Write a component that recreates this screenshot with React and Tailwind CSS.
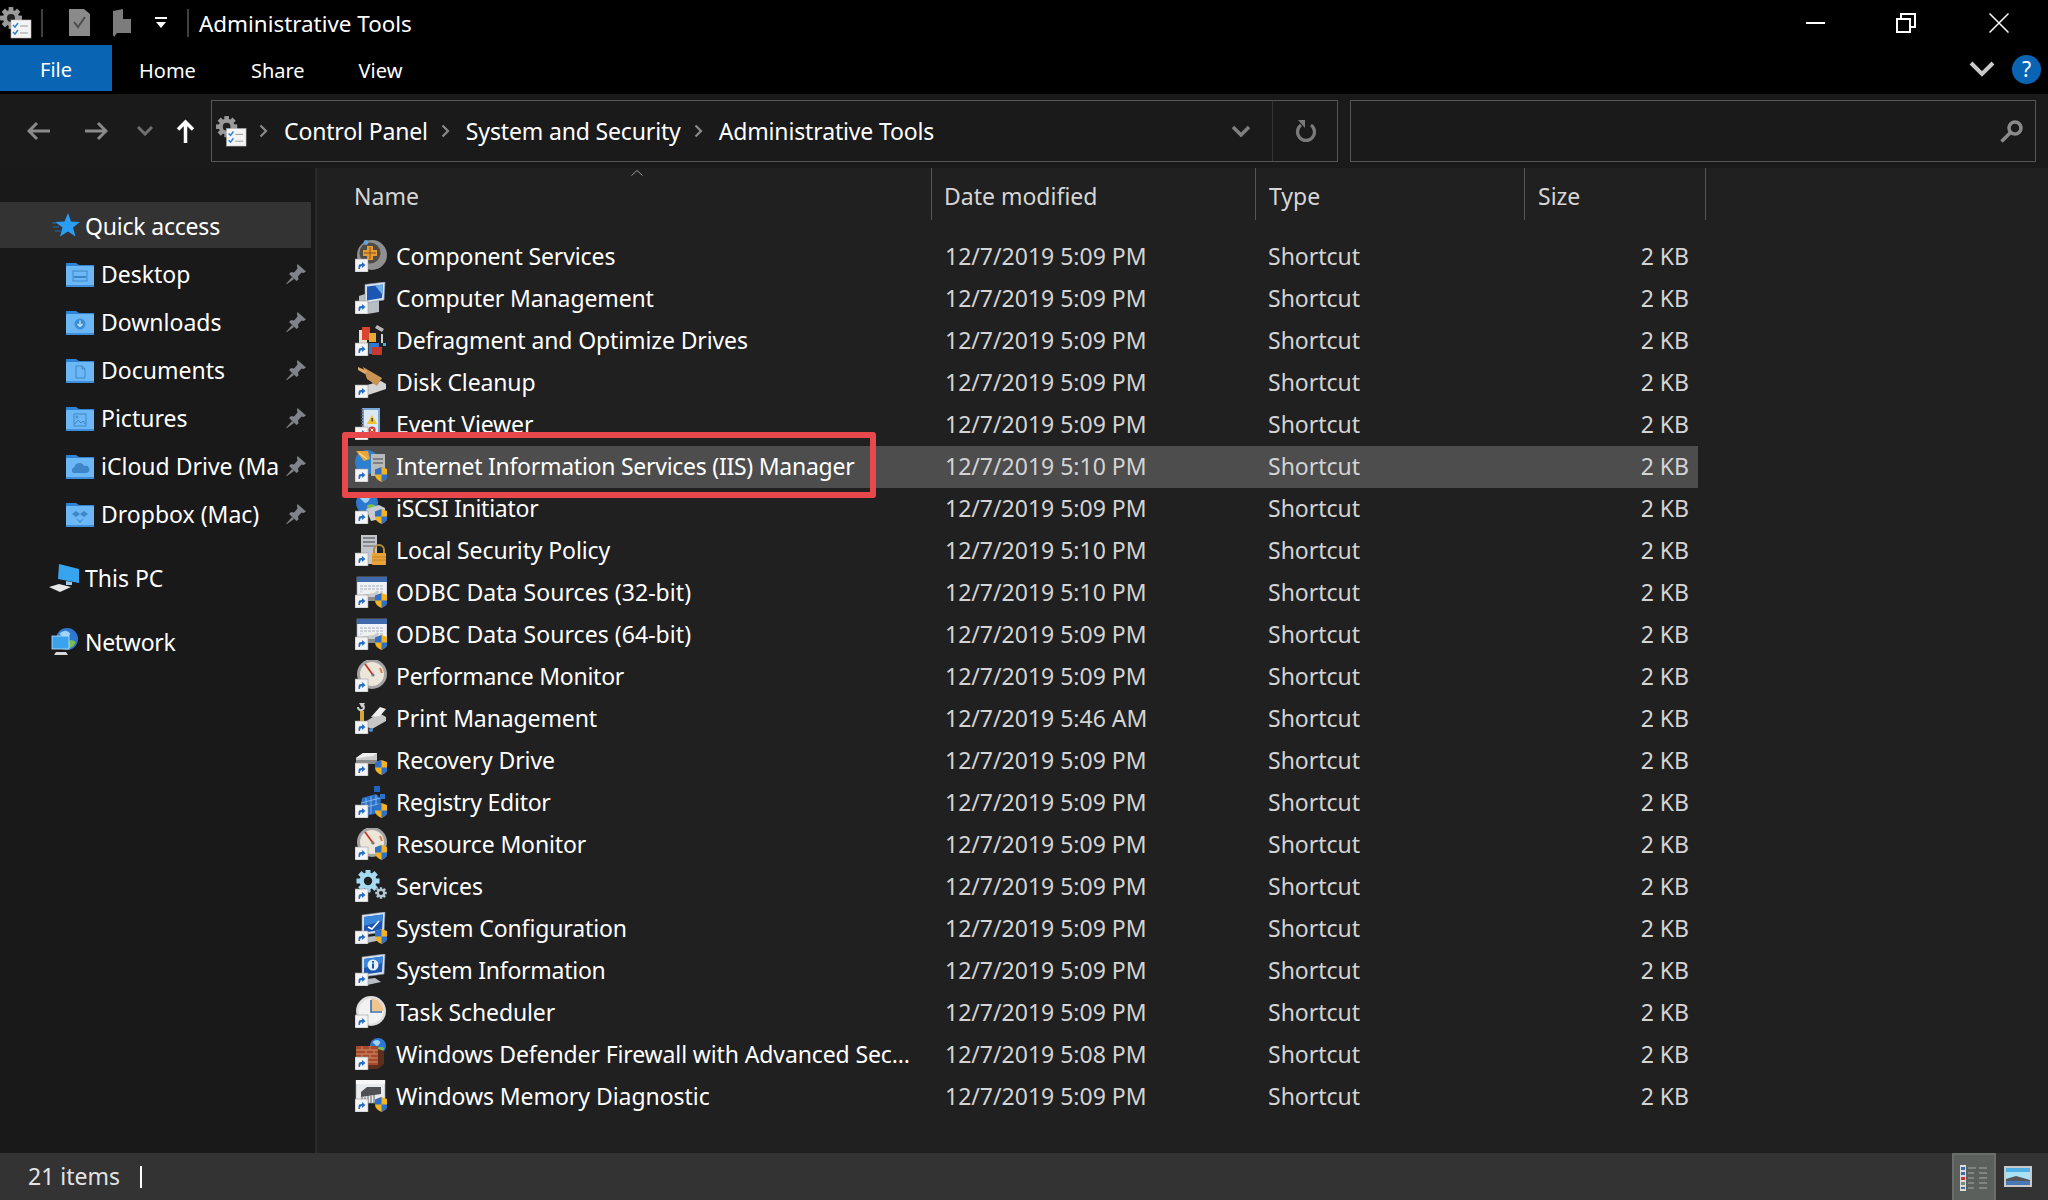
import React from "react";

const Shortcut = () => (
  <g>
    <rect x="0" y="19" width="13" height="13" fill="#f4f4f4" stroke="#9a9a9a" strokeWidth="0.6" />
    <path d="M3.5 29 L3.5 26 Q3.5 24 6 24 L7 24 L7 22 L10.5 25 L7 28 L7 26 Q5 26 5 29 Z" fill="#2b6fc4" />
  </g>
);
const Shield = ({ y = 17 }) => (
  <g transform={`translate(20 ${y})`}>
    <path d="M6.5 0 L13 2.5 L13 7.5 Q13 12 6.5 15 Q0 12 0 7.5 L0 2.5 Z" fill="#f5b21f" />
    <path d="M6.5 0 L6.5 7.5 L0 7.5 L0 2.5 Z" fill="#2c70c9" />
    <path d="M6.5 7.5 L13 7.5 Q13 12 6.5 15 Z" fill="#2c70c9" />
  </g>
);
const Globe = ({ x, y, r }) => (
  <g>
    <circle cx={x} cy={y} r={r} fill="#2f78d0" />
    <path d={`M${x - r * 0.7} ${y - r * 0.5} q${r * 0.6} ${-r * 0.5} ${r} 0 q${-r * 0.2} ${r * 0.5} ${-r * 0.5} ${r * 0.5} Z`} fill="#9fd4f7" />
    <path d={`M${x} ${y + r * 0.2} q${r * 0.6} ${-r * 0.2} ${r * 0.8} ${r * 0.1} q${-r * 0.3} ${r * 0.6} ${-r * 0.7} ${r * 0.5} Z`} fill="#7cc04b" />
  </g>
);
const Monitor = ({ glyph }) => (
  <g>
    <path d="M7 3 L30 0 L29 20 L7 23 Z" fill="#d9e3ec" stroke="#8896a4" strokeWidth="0.6" />
    <path d="M9 5 L28 2.5 L27 18 L9 20.5 Z" fill="#1c56b5" />
    <path d="M9 5 L28 2.5 L27 9 L9 14 Z" fill="#3a86d8" />
    {glyph}
  </g>
);
const Dial = () => (
  <g>
    <circle cx="17" cy="14" r="15" fill="#a5a5a5" />
    <circle cx="17" cy="14" r="12" fill="#ece5da" />
    <path d="M10 4 L18 15" stroke="#c4392b" strokeWidth="1.8" />
    <path d="M25 8 L27 13" stroke="#d87c4a" strokeWidth="2" />
    <circle cx="18" cy="15" r="1.6" fill="#777" />
  </g>
);
const Drive = ({ x = 3, y = 11 }) => (
  <g transform={`translate(${x} ${y})`}>
    <path d="M0 5 L7 0 L21 0 L21 9 L0 11 Z" fill="#c9c9c9" />
    <path d="M0 5 L7 0 L21 0 L17 3 L3 5 Z" fill="#efefef" />
    <rect x="0" y="7" width="21" height="4" fill="#8b8b8b" />
  </g>
);
const Gear = ({ x, y, r, fill = "#a6d9f2" }) => (
  <g transform={`translate(${x} ${y})`}>
    {[0, 45, 90, 135].map((a) => (
      <rect key={a} x={-r * 0.25} y={-r * 1.15} width={r * 0.5} height={r * 2.3} fill={fill} transform={`rotate(${a})`} />
    ))}
    <circle r={r * 0.85} fill={fill} />
    <circle r={r * 0.42} fill="#202020" />
  </g>
);

const icons = {
  component: (<g><circle cx="17" cy="15" r="15" fill="#8f8f8f" /><circle cx="15" cy="13" r="10.5" fill="#4f4b45" /><path d="M12 6 H18 V10 H22 V16 H18 V20 H12 V16 H8 V10 H12 Z" fill="#e59c35" /><path d="M15 7 V19 M9 13 H21" stroke="#7a4d14" strokeWidth="0.9" /><circle cx="11" cy="2.5" r="2.4" fill="#6ba0d8" /><Shortcut /></g>),
  computer: (<g><path d="M4 14 L16 10 L24 14 L24 30 L12 32 L4 26 Z" fill="#b9bec4" /><path d="M10 2.5 L30 0 L29 18 L10 21 Z" fill="#d9e3ec" stroke="#8896a4" strokeWidth="0.6" /><path d="M12 4.5 L28 2.5 L27 16 L12 18.5 Z" fill="#1c56b5" /><path d="M20 3.5 L28 2.5 L27 12 Z" fill="#6cb2ea" /><Shortcut /></g>),
  defrag: (<g><rect x="4" y="6" width="8" height="14" fill="#e8e0d0" /><rect x="7" y="3" width="8" height="13" fill="#d9452f" /><rect x="14" y="9" width="7" height="9" fill="#e7a938" /><rect x="14" y="19" width="10" height="11" fill="#2f78d0" /><rect x="17" y="23" width="10" height="8" fill="#c53a2f" /><path d="M22 1 L29 5 L27 8 L20 4 Z" fill="#b8b8b8" /><path d="M27 10 V19" stroke="#d0d0d0" strokeWidth="2" /><rect x="28" y="19" width="3" height="3" fill="#4ea6e8" /><Shortcut /></g>),
  cleanup: (<g><path d="M2 22 L26 15 L31 18 L31 23 L10 30 L2 26 Z" fill="#d5d5d5" /><path d="M8 1 L27 12 L22 20 L12 13 Z" fill="#c99555" /><path d="M3 1 L12 5 L10 8 L3 4 Z" fill="#dcaa6c" /><Shortcut /></g>),
  event: (<g><rect x="7" y="0" width="18" height="29" fill="#7da9d8" /><rect x="9" y="2" width="14" height="25" fill="#dce9f5" /><path d="M7 1 V28" stroke="#555" strokeWidth="2.5" strokeDasharray="1.5 1.5" /><path d="M17 7 L22 16 H12 Z" fill="#f1c232" /><rect x="16.5" y="10" width="1.2" height="3.5" fill="#333" /><circle cx="17" cy="22" r="3.6" fill="#d2332b" /><path d="M15.5 20.5 L18.5 23.5 M18.5 20.5 L15.5 23.5" stroke="#fff" strokeWidth="1" /><Shortcut /></g>),
  iis: (<g><circle cx="12" cy="12" r="12" fill="#2d7fcf" /><path d="M1 1 H13 L15 9 L9 11 Z" fill="#e9a53a" /><path d="M4 3 L12 9" stroke="#ffd98a" strokeWidth="1.5" /><rect x="16" y="4" width="14" height="22" fill="#b7b9bb" /><path d="M18 9 H28 M18 13 H28" stroke="#6e7072" strokeWidth="1.4" /><Shortcut /><Shield /></g>),
  iscsi: (<g><Globe x={12} y={11} r={11} /><path d="M11 17 L24 13 L30 16 L30 26 L16 29 Z" fill="#c8cbcf" /><Shortcut /><Shield /></g>),
  secpol: (<g><rect x="6" y="1" width="16" height="29" fill="#c2c6ca" /><rect x="8" y="3" width="12" height="2" fill="#7f8488" /><rect x="8" y="7" width="12" height="2" fill="#7f8488" /><rect x="8" y="11" width="12" height="2" fill="#8f9498" /><path d="M19 20 V16 a5 5 0 0 1 10 0 V20" fill="none" stroke="#b68b3d" strokeWidth="2" /><rect x="17" y="19" width="14" height="12" rx="1" fill="#e9a33a" /><path d="M17 23 H31 M17 26 H31" stroke="#b77b21" strokeWidth="0.8" /><Shortcut /></g>),
  odbc: (<g><rect x="2" y="1" width="30" height="22" fill="#eef1f5" stroke="#9aa4ae" strokeWidth="0.6" /><rect x="2" y="1" width="30" height="5" fill="#3e69aa" /><path d="M5 10 H29 M5 13 H29 M5 16 H29" stroke="#a9b0b8" strokeWidth="1" strokeDasharray="3 1" /><Drive x={2} y={14} /><Shortcut /><Shield /></g>),
  perfmon: (<g><Dial /><Shortcut /></g>),
  print: (<g><path d="M10 20 L24 11 L31 15 L31 19 L17 27 L10 24 Z" fill="#c6c6c6" /><path d="M16 15 L25 5 L31 7 L25 14 Z" fill="#f0f0f0" /><path d="M4 1 L10 1 L7 6 Z" fill="#cfcfcf" /><path d="M8 3 A3 3 0 1 1 3 5" fill="none" stroke="#cfcfcf" strokeWidth="2" /><rect x="5" y="9" width="4" height="11" fill="#d7a63a" /><circle cx="16" cy="28" r="2" fill="#4b8ad0" /><Shortcut /></g>),
  recovery: (<g><Drive x={1} y={9} /><Shortcut /><Shield y={16} /></g>),
  regedit: (<g><path d="M7 12 L21 8 L26 13 L24 27 L10 30 L5 24 Z" fill="#2a6fc9" /><path d="M11 12 V29 M16 10 V28 M21 9 V27 M6 17 L25 12 M6 22 L24 18" stroke="#8bbcec" strokeWidth="0.9" /><rect x="19" y="0" width="6" height="6" fill="#1f63bc" /><rect x="25" y="8" width="5" height="5" fill="#2a72cc" /><Shortcut /><Shield /></g>),
  resmon: (<g><Dial /><Shortcut /><Shield /></g>),
  services: (<g><Gear x={13} y={11} r={10} /><Gear x={26} y={23} r={5} fill="#b4c9d4" /><Shortcut /></g>),
  msconfig: (<g><path d="M4 26 L20 24 L26 28 L12 31 Z" fill="#b9bec4" /><Monitor glyph={<path d="M13 15 L17 17 L24 9" fill="none" stroke="#fff" strokeWidth="1.6" />} /><Shortcut /><Shield /></g>),
  msinfo: (<g><path d="M4 26 L20 24 L26 28 L12 31 Z" fill="#b9bec4" /><Monitor glyph={<g><circle cx="18" cy="11" r="5.5" fill="#e8f2fb" /><rect x="17" y="9.5" width="2" height="5" fill="#1c56b5" /><rect x="17" y="7" width="2" height="1.7" fill="#1c56b5" /></g>} /><Shortcut /></g>),
  task: (<g><circle cx="16" cy="15" r="15" fill="#dedede" /><circle cx="16" cy="15" r="12.5" fill="#f2f2f2" /><path d="M16 15 V2.5 A12.5 12.5 0 0 1 28.5 15 Z" fill="#f0c48e" /><path d="M16 4 V16 H27" fill="none" stroke="#3c6fae" strokeWidth="1.6" /><Shortcut /></g>),
  firewall: (<g><Globe x={23} y={8} r={8} /><rect x="1" y="8" width="22" height="19" fill="#a8482c" /><path d="M1 12 H23 M1 16 H23 M1 20 H23 M1 24 H23" stroke="#d19b6a" strokeWidth="0.9" /><path d="M7 8 V12 M15 8 V12 M11 12 V16 M19 12 V16 M7 16 V20 M15 16 V20" stroke="#d19b6a" strokeWidth="0.8" /><path d="M23 11 L29 13 V26 L23 31 H12 V27 H23 Z" fill="#5c2e1e" /><Shortcut /></g>),
  memory: (<g><rect x="1" y="0" width="29" height="23" fill="#e9ebee" stroke="#9aa0a6" strokeWidth="0.6" /><rect x="1" y="0" width="29" height="4" fill="#f8f8f8" /><path d="M6 12 L12 7 L26 7 L26 14 L6 17 Z" fill="#4f5053" /><path d="M7 17 V23 M10 17 V23 M13 16 V23 M16 16 V23 M19 15 V23" stroke="#6d6e71" strokeWidth="1.1" /><Shortcut /><Shield /></g>),
};

const T = "tracking-[-0.12px]";
const TT = "tracking-[-0.26px]";
const files = [
  ["Component Services", "12/7/2019 5:09 PM", "component", T],
  ["Computer Management", "12/7/2019 5:09 PM", "computer", T],
  ["Defragment and Optimize Drives", "12/7/2019 5:09 PM", "defrag", T],
  ["Disk Cleanup", "12/7/2019 5:09 PM", "cleanup", T],
  ["Event Viewer", "12/7/2019 5:09 PM", "event", T],
  ["Internet Information Services (IIS) Manager", "12/7/2019 5:10 PM", "iis", TT],
  ["iSCSI Initiator", "12/7/2019 5:09 PM", "iscsi", TT],
  ["Local Security Policy", "12/7/2019 5:10 PM", "secpol", T],
  ["ODBC Data Sources (32-bit)", "12/7/2019 5:10 PM", "odbc", "tracking-[0.05px]"],
  ["ODBC Data Sources (64-bit)", "12/7/2019 5:09 PM", "odbc", "tracking-[0.05px]"],
  ["Performance Monitor", "12/7/2019 5:09 PM", "perfmon", TT],
  ["Print Management", "12/7/2019 5:46 AM", "print", T],
  ["Recovery Drive", "12/7/2019 5:09 PM", "recovery", T],
  ["Registry Editor", "12/7/2019 5:09 PM", "regedit", TT],
  ["Resource Monitor", "12/7/2019 5:09 PM", "resmon", T],
  ["Services", "12/7/2019 5:09 PM", "services", T],
  ["System Configuration", "12/7/2019 5:09 PM", "msconfig", T],
  ["System Information", "12/7/2019 5:09 PM", "msinfo", TT],
  ["Task Scheduler", "12/7/2019 5:09 PM", "task", T],
  ["Windows Defender Firewall with Advanced Sec...", "12/7/2019 5:08 PM", "firewall", T],
  ["Windows Memory Diagnostic", "12/7/2019 5:09 PM", "memory", "tracking-[-0.05px]"],
];

const AppIcon = ({ size = 32 }) => (
  <svg width={size} height={size} viewBox="0 0 32 32" className="shrink-0">
    <Gear x={11} y={11} r={9.5} fill="#9a9a9a" />
    <rect x="11" y="13" width="20" height="18" fill="#f4f4f4" stroke="#bbb" strokeWidth="0.6" />
    <path d="M13 18 L15 20 L18 16 M13 25 L15 27 L18 23" fill="none" stroke="#2d84d8" strokeWidth="1.5" />
    <path d="M20 19 H28 M20 26 H28" stroke="#999" strokeWidth="1" />
  </svg>
);

const Pin = () => (
  <svg width="20" height="20" viewBox="0 0 20 20" className="shrink-0">
    <path d="M11.5 0 L20 7.5 L17.5 9 L15.5 8.5 L12 12.5 L12.5 15.5 L10.5 17 L3 10 L5 8 L8 8.5 L11.5 4.5 L11 2 Z" fill="#80848a" />
    <path d="M6 13 L0 20 L1 20 L8 15 Z" fill="#80848a" />
  </svg>
);

const folderGlyph = {
  desktop: <g fill="none" stroke="#3d86c8" strokeWidth="1"><rect x="7" y="9" width="14" height="10" /><path d="M8 15 H20" strokeWidth="2" /></g>,
  downloads: <g><circle cx="14" cy="14" r="5.5" fill="#3d8fd6" /><path d="M14 10.5 V16 M11.5 14 L14 16.5 L16.5 14" stroke="#cfe8fc" strokeWidth="1.2" fill="none" /></g>,
  documents: <path d="M10 8 H16 L19 11 V20 H10 Z M16 8 V11 H19" fill="none" stroke="#3d86c8" strokeWidth="1" />,
  pictures: <g fill="none" stroke="#3d86c8" strokeWidth="1"><rect x="8" y="8" width="12" height="12" /><path d="M9 18 L12 14 L15 17 L17 15 L19 18" /><circle cx="11" cy="11" r="1" /></g>,
  cloud: <path d="M7 19 a3.5 3.5 0 0 1 1.5 -6 a5 5 0 0 1 9.5 -1 a3.5 3.5 0 0 1 3 7 Z" fill="#3d86c8" />,
  dropbox: <g fill="#3d86c8"><path d="M10 9 L14 12 L10 15 L6 12 Z M18 9 L22 12 L18 15 L14 12 Z" /><path d="M10 16 L14 19 L18 16 L14 21 Z" /></g>,
};

const Folder = ({ kind }) => (
  <svg width="28" height="25" viewBox="0 0 28 25" className="shrink-0">
    <path d="M0 1 H10 L13 3 H28 V6 H0 Z" fill="#2f82d4" />
    <rect x="0" y="4" width="28" height="21" rx="1" fill="#6cb8f6" />
    <rect x="0" y="23" width="28" height="2" fill="#3f90dc" />
    {folderGlyph[kind]}
  </svg>
);

const NavPinned = ({ kind, label }) => (
  <div className="flex h-[48px] items-center pl-[66px] pr-[9px]">
    <Folder kind={kind} />
    <span className="ml-[7px] whitespace-nowrap">{label}</span>
    <span className="ml-auto"><Pin /></span>
  </div>
);

const Caret = () => (
  <svg width="12" height="6" viewBox="0 0 12 6" className="absolute left-[314px] top-[2px]">
    <path d="M0.5 5.5 L6 0.5 L11.5 5.5" fill="none" stroke="#9a9a9a" strokeWidth="1" />
  </svg>
);

const Head = ({ w, pl, children }) => (
  <div className={`${w} ${pl} relative flex items-center border-r border-[#555] pt-[5px] text-[#d6d6d6] leading-none`}>{children}</div>
);

export default function App() {
  return (
    <div className="flex h-[1200px] w-[2048px] flex-col overflow-hidden bg-black text-[23px] text-white font-['Noto_Sans',sans-serif]">
      {/* Title bar */}
      <div className="flex h-[45px] shrink-0 items-center">
        <AppIcon />
        <div className="ml-[9px] h-[28px] w-[2px] bg-[#3f3f3f]" />
        <svg width="21" height="27" viewBox="0 0 21 27" className="ml-[26px]">
          <path d="M0 0 H15 L21 5 V27 H0 Z" fill="#8a8a8a" />
          <path d="M5 13 L9 18 L16 8" fill="none" stroke="#4e4e4e" strokeWidth="2" />
        </svg>
        <svg width="18" height="28" viewBox="0 0 18 28" className="ml-[23px]">
          <path d="M0 2 L10 0 V10 H18 V24 H4 L1 28 L0 26 Z" fill="#7c7c7c" />
        </svg>
        <svg width="12" height="12" viewBox="0 0 12 12" className="ml-[24px]">
          <path d="M0 0 H12 V2 H0 Z M1 5 H11 L6 11 Z" fill="#fff" />
        </svg>
        <div className="ml-[20px] h-[28px] w-[2px] bg-[#3f3f3f]" />
        <span className="ml-[10px] pt-[2px] text-[22.4px]">Administrative Tools</span>
        <div className="ml-auto flex h-full items-center">
          <div className="mr-[71px] h-[2px] w-[19px] bg-white" />
          <svg width="20" height="20" viewBox="0 0 20 20" className="mr-[73px]">
            <path d="M1 6 H14 V19 H1 Z M5 6 V1 H19 V14 H14" fill="none" stroke="#fff" strokeWidth="2" />
          </svg>
          <svg width="20" height="20" viewBox="0 0 20 20" className="mr-[39px]">
            <path d="M0.5 0.5 L19.5 19.5 M19.5 0.5 L0.5 19.5" stroke="#fff" strokeWidth="1.5" />
          </svg>
        </div>
      </div>
      {/* Ribbon tabs */}
      <div className="flex h-[49px] shrink-0 items-start text-[20px]">
        <div className="flex h-[46px] w-[112px] items-center justify-center bg-[#0a64b4] pt-[3px]">File</div>
        <div className="flex h-[46px] flex-1 items-center">
          <span className="ml-[27px] mt-[5px]">Home</span>
          <span className="ml-[55px] mt-[5px]">Share</span>
          <span className="ml-[54px] mt-[5px]">View</span>
          <svg width="26" height="16" viewBox="0 0 26 16" className="ml-auto mr-[17px] mt-[2px]">
            <path d="M2 2 L13 13 L24 2" fill="none" stroke="#c9c9c9" strokeWidth="4" />
          </svg>
          <div className="mr-[7px] mt-[2px] flex h-[29px] w-[29px] items-center justify-center rounded-full bg-[#0a64b4] text-[21px] leading-none">?</div>
        </div>
      </div>
      {/* Address bar */}
      <div className="flex h-[74px] shrink-0 items-center bg-[#1a1a1a]">
        <div className="flex w-[211px] items-center">
          <svg width="24" height="20" viewBox="0 0 24 20" className="ml-[27px]">
            <path d="M1 10 H23 M10 2 L2 10 L10 18" fill="none" stroke="#8a8a8a" strokeWidth="3" />
          </svg>
          <svg width="24" height="20" viewBox="0 0 24 20" className="ml-[33px]">
            <path d="M1 10 H23 M14 2 L22 10 L14 18" fill="none" stroke="#8a8a8a" strokeWidth="3" />
          </svg>
          <svg width="16" height="10" viewBox="0 0 16 10" className="ml-[29px]">
            <path d="M1 1 L8 8 L15 1" fill="none" stroke="#6f6f6f" strokeWidth="3" />
          </svg>
          <svg width="19" height="24" viewBox="0 0 19 24" className="ml-[23px]">
            <path d="M9.5 24 V3 M2 10.5 L9.5 3 L17 10.5" fill="none" stroke="#fff" strokeWidth="3.5" />
          </svg>
        </div>
        <div className="flex h-[62px] w-[1127px] items-center border border-[#555] tracking-[-0.15px]">
          <div className="ml-[4px]"><AppIcon size={31} /></div>
          <Chevron className="ml-[12px]" />
          <span className="ml-[16px] text-[23px]">Control Panel</span>
          <Chevron className="ml-[13px]" />
          <span className="ml-[16px]">System and Security</span>
          <Chevron className="ml-[13px]" />
          <span className="ml-[16px]">Administrative Tools</span>
          <svg width="20" height="12" viewBox="0 0 20 12" className="ml-auto">
            <path d="M2 2 L10 10 L18 2" fill="none" stroke="#7f7f7f" strokeWidth="3.5" />
          </svg>
          <div className="ml-[21px] h-full w-px bg-[#333]" />
          <svg width="22" height="24" viewBox="0 0 22 24" className="ml-[22px] mr-[20px]">
            <path d="M6 6 A8.5 8.5 0 1 0 16 6" fill="none" stroke="#7a7a7a" strokeWidth="3.2" />
            <path d="M3 1 H10 V9 Z" fill="#7a7a7a" />
          </svg>
        </div>
        <div className="ml-[12px] flex h-[62px] w-[686px] items-center justify-end border border-[#555] pr-[12px]">
          <svg width="23" height="23" viewBox="0 0 23 23">
            <circle cx="15" cy="8" r="6" fill="none" stroke="#8a8a8a" strokeWidth="3.5" />
            <path d="M10.5 12.5 L1.5 21.5" stroke="#8a8a8a" strokeWidth="3.5" />
          </svg>
        </div>
      </div>
      {/* Main */}
      <div className="flex min-h-0 flex-1 bg-[#202020]">
        <nav className="w-[317px] shrink-0 border-r-2 border-r-[#2a2a2a] bg-[#191919] pt-[34px] text-[23px]">
          <div className="flex h-[46px] w-[311px] items-center bg-[#333] pl-[52px]">
            <svg width="28" height="24" viewBox="0 0 28 24" className="shrink-0">
              <path d="M16 0 L19 8.5 L28 9 L21 14.5 L23.5 23.5 L16 18.5 L8 23.5 L10.5 14.5 L3 9 L12.5 8.5 Z" fill="#2a9df4" />
              <path d="M0 10 H5 M1 14 H7 M3 18 H9" stroke="#1c6fae" strokeWidth="1" />
            </svg>
            <span className="ml-[5px] pt-[2px] tracking-[-0.2px]">Quick access</span>
          </div>
          <div className="mt-[2px]">
            <NavPinned kind="desktop" label="Desktop" />
            <NavPinned kind="downloads" label="Downloads" />
            <NavPinned kind="documents" label="Documents" />
            <NavPinned kind="pictures" label="Pictures" />
            <NavPinned kind="cloud" label="iCloud Drive (Ma" />
            <NavPinned kind="dropbox" label="Dropbox (Mac)" />
          </div>
          <div className="mt-[16px] flex h-[48px] items-center pl-[49px]">
            <svg width="30" height="28" viewBox="0 0 30 28" className="shrink-0">
              <path d="M10 0 L30 5 V19 L9 15 Z" fill="#36a4ee" />
              <path d="M17 17 L23 18 V21 L17 21 Z" fill="#9cc9e8" />
              <path d="M0 23 L10 20 L22 23 L11 28 Z" fill="#e8e8e8" />
            </svg>
            <span className="ml-[6px]">This PC</span>
          </div>
          <div className="mt-[16px] flex h-[48px] items-center pl-[51px]">
            <svg width="28" height="28" viewBox="0 0 28 28" className="shrink-0">
              <Globe x={16} y={11} r={11} />
              <rect x="1" y="8" width="17" height="13" fill="#3aa3ec" stroke="#bfe2f8" strokeWidth="0.8" />
              <path d="M5 24 H15 L17 27 H3 Z" fill="#d8d8d8" />
            </svg>
            <span className="ml-[6px] tracking-[-0.3px]">Network</span>
          </div>
        </nav>
        <main className="min-w-0 flex-1">
          <div className="flex h-[52px] text-[23px]">
            <Head w="w-[615px]" pl="pl-[37px]">Name<Caret /></Head>
            <Head w="w-[324px]" pl="pl-[12px]">Date modified</Head>
            <Head w="w-[269px]" pl="pl-[13px]">Type</Head>
            <Head w="w-[181px]" pl="pl-[13px]">Size</Head>
          </div>
          <div className="relative ml-[28px] mt-[16px] w-[1353px]">
            {files.map(([name, date, icon, track]) => (
              <div key={name} className={`grid h-[42px] grid-cols-[600px_323px_1fr_100px] items-center pb-[2px] ${name.startsWith("Internet") ? "bg-[#4d4d4d]" : ""}`}>
                <div className={`flex items-center whitespace-nowrap pl-[10px] ${track}`}>
                  <svg width="32" height="32" viewBox="0 0 32 32" className="mr-[9px] shrink-0">{icons[icon]}</svg>
                  {name}
                </div>
                <div className="text-[#d4d4d4]">{date}</div>
                <div className="text-[#d4d4d4]">Shortcut</div>
                <div className="pr-[9px] text-right text-[#d4d4d4]">2 KB</div>
              </div>
            ))}
            <div className="absolute left-[-3px] top-[196px] h-[66px] w-[534px] rounded-[3px] border-[6px] border-[#e8474c]" />
          </div>
        </main>
      </div>
      {/* Status bar */}
      <div className="flex h-[47px] shrink-0 items-center bg-[#333] text-[23px] text-[#e3e3e3]">
        <span className="ml-[28px]">21 items</span>
        <div className="ml-[20px] h-[22px] w-[2px] bg-white" />
        <div className="ml-auto flex h-full w-[44px] items-center justify-center border-2 border-b-0 border-[#6a6e6a] bg-[#5c605c]">
          <svg width="28" height="26" viewBox="0 0 28 26">
            <rect x="0" y="0" width="6" height="26" fill="#dcdcdc" />
            <rect x="1" y="2" width="4" height="3" fill="#3b6ea8" /><rect x="1" y="7" width="4" height="3" fill="#3b6ea8" /><rect x="1" y="12" width="4" height="3" fill="#c33" /><rect x="1" y="17" width="4" height="3" fill="#7a8a7a" /><rect x="1" y="22" width="4" height="2" fill="#3b6ea8" />
            <path d="M8 3 H16 M19 3 H27 M8 8 H14 M19 8 H27 M8 13 H14 M19 13 H27 M8 18 H14 M19 18 H27 M8 23 H14 M19 23 H27" stroke="#8d908d" strokeWidth="1.4" />
          </svg>
        </div>
        <svg width="28" height="21" viewBox="0 0 28 21" className="ml-[8px] mr-[16px] shrink-0">
          <rect width="28" height="21" fill="#c9c9c9" />
          <rect x="2" y="2" width="24" height="17" fill="#a9e2f5" />
          <path d="M2 2 H26 V6 H2 Z" fill="#4fb0e8" />
          <path d="M2 13 L12 10 L26 14 V15 H2 Z" fill="#55565a" />
          <path d="M2 15 H26 V19 H2 Z" fill="#4a78b4" />
        </svg>
      </div>
    </div>
  );
}

function Chevron({ className }) {
  return (
    <svg width="9" height="14" viewBox="0 0 9 14" className={`shrink-0 ${className}`}>
      <path d="M1.5 1.5 L7 7 L1.5 12.5" fill="none" stroke="#8a8a8a" strokeWidth="2.2" />
    </svg>
  );
}
